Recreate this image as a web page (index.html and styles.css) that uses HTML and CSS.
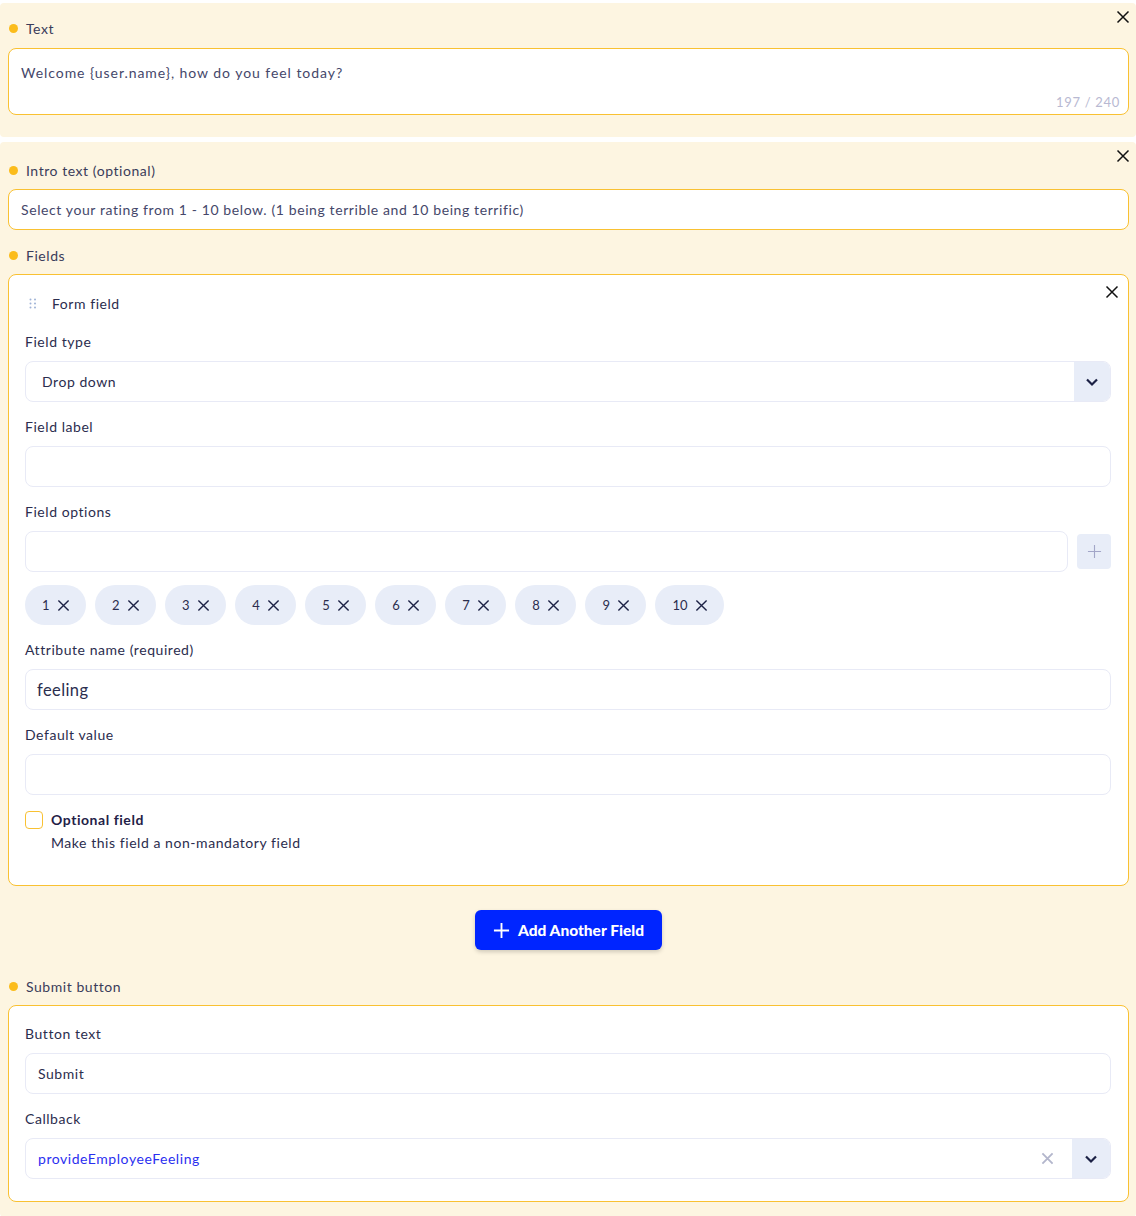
FILE: index.html
```html
<!DOCTYPE html>
<html>
<head>
<meta charset="utf-8">
<link rel="stylesheet" href="styles.css">
</head>
<body>
<section class="panel panel-first">
  <button class="close close-panel" aria-label="Close"><svg viewBox="0 0 14 14" width="14" height="14"><path d="M1.5 1.5l11 11M12.5 1.5l-11 11" stroke="#111" stroke-width="1.5" fill="none"/></svg></button>
  <div class="sec-label"><span class="dot"></span>Text</div>
  <div class="textarea">
    <div class="ta-text">Welcome {user.name}, how do you feel today?</div>
    <div class="counter">197 / 240</div>
  </div>
</section>

<section class="panel panel-main">
  <button class="close close-panel" aria-label="Close"><svg viewBox="0 0 14 14" width="14" height="14"><path d="M1.5 1.5l11 11M12.5 1.5l-11 11" stroke="#111" stroke-width="1.5" fill="none"/></svg></button>
  <div class="sec-label"><span class="dot"></span>Intro text (optional)</div>
  <div class="yinput">Select your rating from 1 - 10 below. (1 being terrible and 10 being terrific)</div>

  <div class="sec-label sec-gap"><span class="dot"></span>Fields</div>
  <div class="card card-field">
    <button class="close close-card" aria-label="Close"><svg viewBox="0 0 14 14" width="14" height="14"><path d="M1.5 1.5l11 11M12.5 1.5l-11 11" stroke="#111" stroke-width="1.5" fill="none"/></svg></button>
    <div class="card-head">
      <svg class="grip" viewBox="0 0 8 11" width="8" height="11"><g fill="#9fb2d6"><circle cx="1.5" cy="1.5" r="1"/><circle cx="6" cy="1.5" r="1"/><circle cx="1.5" cy="5.5" r="1"/><circle cx="6" cy="5.5" r="1"/><circle cx="1.5" cy="9.5" r="1"/><circle cx="6" cy="9.5" r="1"/></g></svg>
      <span>Form field</span>
    </div>

    <div class="field">
      <div class="flabel">Field type</div>
      <div class="select">
        <div class="sel-value">Drop down</div>
        <div class="sel-btn"><svg viewBox="0 0 14 10" width="14" height="10"><path d="M2 2.5l5 5 5-5" stroke="#1c2145" stroke-width="2.2" fill="none"/></svg></div>
      </div>
    </div>

    <div class="field">
      <div class="flabel">Field label</div>
      <div class="input"></div>
    </div>

    <div class="field">
      <div class="flabel">Field options</div>
      <div class="opt-row">
        <div class="input grow"></div>
        <div class="plus-btn"><svg viewBox="0 0 16 16" width="15" height="15"><path d="M8 1v14M1 8h14" stroke="#a3a6c8" stroke-width="1.2" fill="none"/></svg></div>
      </div>
      <div class="chips">
        <span class="chip">1<svg viewBox="0 0 14 14" width="13" height="13"><path d="M1.5 1.5l11 11M12.5 1.5l-11 11" stroke="#1c2145" stroke-width="1.5" fill="none"/></svg></span>
        <span class="chip">2<svg viewBox="0 0 14 14" width="13" height="13"><path d="M1.5 1.5l11 11M12.5 1.5l-11 11" stroke="#1c2145" stroke-width="1.5" fill="none"/></svg></span>
        <span class="chip">3<svg viewBox="0 0 14 14" width="13" height="13"><path d="M1.5 1.5l11 11M12.5 1.5l-11 11" stroke="#1c2145" stroke-width="1.5" fill="none"/></svg></span>
        <span class="chip">4<svg viewBox="0 0 14 14" width="13" height="13"><path d="M1.5 1.5l11 11M12.5 1.5l-11 11" stroke="#1c2145" stroke-width="1.5" fill="none"/></svg></span>
        <span class="chip">5<svg viewBox="0 0 14 14" width="13" height="13"><path d="M1.5 1.5l11 11M12.5 1.5l-11 11" stroke="#1c2145" stroke-width="1.5" fill="none"/></svg></span>
        <span class="chip">6<svg viewBox="0 0 14 14" width="13" height="13"><path d="M1.5 1.5l11 11M12.5 1.5l-11 11" stroke="#1c2145" stroke-width="1.5" fill="none"/></svg></span>
        <span class="chip">7<svg viewBox="0 0 14 14" width="13" height="13"><path d="M1.5 1.5l11 11M12.5 1.5l-11 11" stroke="#1c2145" stroke-width="1.5" fill="none"/></svg></span>
        <span class="chip">8<svg viewBox="0 0 14 14" width="13" height="13"><path d="M1.5 1.5l11 11M12.5 1.5l-11 11" stroke="#1c2145" stroke-width="1.5" fill="none"/></svg></span>
        <span class="chip">9<svg viewBox="0 0 14 14" width="13" height="13"><path d="M1.5 1.5l11 11M12.5 1.5l-11 11" stroke="#1c2145" stroke-width="1.5" fill="none"/></svg></span>
        <span class="chip">10<svg viewBox="0 0 14 14" width="13" height="13"><path d="M1.5 1.5l11 11M12.5 1.5l-11 11" stroke="#1c2145" stroke-width="1.5" fill="none"/></svg></span>
      </div>
    </div>

    <div class="field">
      <div class="flabel">Attribute name (required)</div>
      <div class="input big">feeling</div>
    </div>

    <div class="field">
      <div class="flabel">Default value</div>
      <div class="input"></div>
    </div>

    <div class="check-row">
      <span class="checkbox"></span>
      <div class="check-text">
        <div class="check-title">Optional field</div>
        <div class="check-desc">Make this field a non-mandatory field</div>
      </div>
    </div>
  </div>

  <div class="add-wrap">
    <button class="add-btn"><svg viewBox="0 0 18 18" width="17" height="17"><path d="M9 1v16M1 9h16" stroke="#fff" stroke-width="2" fill="none"/></svg>Add Another Field</button>
  </div>

  <div class="sec-label"><span class="dot"></span>Submit button</div>
  <div class="card card-submit">
    <div class="field first">
      <div class="flabel">Button text</div>
      <div class="input">Submit</div>
    </div>
    <div class="field">
      <div class="flabel">Callback</div>
      <div class="select">
        <div class="sel-value blue">provideEmployeeFeeling</div>
        <div class="sel-clear"><svg viewBox="0 0 14 14" width="13" height="13"><path d="M1.5 1.5l11 11M12.5 1.5l-11 11" stroke="#b3b6cc" stroke-width="2" fill="none"/></svg></div>
        <div class="sel-btn wide"><svg viewBox="0 0 14 10" width="14" height="10"><path d="M2 2.5l5 5 5-5" stroke="#1c2145" stroke-width="2.2" fill="none"/></svg></div>
      </div>
    </div>
  </div>
</section>
</body>
</html>
```

FILE: styles.css
```css
* { box-sizing: border-box; }

body {
  margin: 0;
  background: #ffffff;
  font-family: "Lato", "Noto Sans", sans-serif;
  font-size: 14px;
  letter-spacing: 0.55px;
  color: #2b2d4e;
}

.panel {
  position: relative;
  background: #fdf5e1;
  border-radius: 4px;
  padding: 15px 7px 22px 8px;
}

.panel-first {
  margin-top: 3px;
}

.panel-main {
  margin-top: 5px;
  padding-top: 18px;
  padding-bottom: 15px;
}

.close {
  position: absolute;
  border: 0;
  background: transparent;
  padding: 0;
  width: 14px;
  height: 14px;
  display: flex;
  cursor: pointer;
}

.close-panel {
  top: 7px;
  right: 6px;
}

.close-card {
  top: 10px;
  right: 9px;
}

.sec-label {
  display: flex;
  align-items: center;
  height: 20px;
  color: #3a3c5a;
  font-size: 14px;
}

.dot {
  width: 9px;
  height: 9px;
  border-radius: 50%;
  background: #fbbc1c;
  margin: 0 8px 0 1px;
}

.textarea {
  margin-top: 10px;
  height: 67px;
  background: #fff;
  border: 1px solid #f9c132;
  border-radius: 8px;
  padding: 14px 8px 0 12px;
  display: flex;
  flex-direction: column;
}

.ta-text {
  line-height: 20px;
  color: #45476a;
  letter-spacing: 0.95px;
}

.counter {
  margin-top: auto;
  margin-bottom: 4px;
  text-align: right;
  font-size: 13px;
  color: #b8b9d2;
  line-height: 16px;
  letter-spacing: 0.7px;
}

.yinput {
  margin-top: 9px;
  height: 41px;
  background: #fff;
  border: 1px solid #f9c132;
  border-radius: 8px;
  padding: 0 12px;
  display: flex;
  align-items: center;
  color: #45476a;
  letter-spacing: 0.6px;
}

.sec-gap {
  margin-top: 15px;
}

.card {
  position: relative;
  margin-top: 9px;
  background: #fff;
  border: 1px solid #f9c132;
  border-radius: 8px;
  padding: 18px 17px 33px 16px;
}

.card-submit {
  padding-bottom: 22px;
}

.card-head {
  display: flex;
  align-items: center;
  height: 20px;
  color: #2b2d4e;
}

.grip {
  margin: 0 15px 0 4px;
}

.field {
  margin-top: 19px;
}

.card-field .field + .field {
  margin-top: 15px;
}

.card-submit .field.first {
  margin-top: 0;
}

.card-submit .field + .field {
  margin-top: 15px;
}

.flabel {
  height: 20px;
  line-height: 20px;
  color: #2b2d4e;
  margin-bottom: 9px;
}

.input {
  height: 41px;
  border: 1px solid #e8eaf6;
  border-radius: 8px;
  background: #fff;
  padding: 0 12px;
  display: flex;
  align-items: center;
  color: #2b2d4e;
}

.input.big {
  font-size: 16.5px;
  letter-spacing: 0.4px;
  padding-left: 11px;
}

.select {
  height: 41px;
  border: 1px solid #e8eaf6;
  border-radius: 8px;
  background: #fff;
  display: flex;
  align-items: stretch;
  overflow: hidden;
}

.sel-value {
  flex: 1;
  display: flex;
  align-items: center;
  padding-left: 16px;
  color: #2b2d4e;
}

.sel-value.blue {
  color: #2b2ff0;
  padding-left: 12px;
}

.sel-clear {
  width: 50px;
  display: flex;
  align-items: center;
  justify-content: center;
}

.sel-btn {
  width: 36px;
  background: #e8edf8;
  display: flex;
  align-items: center;
  justify-content: center;
}

.sel-btn.wide {
  width: 38px;
}

.opt-row {
  display: flex;
  align-items: center;
  gap: 9px;
}

.grow {
  flex: 1;
}

.plus-btn {
  width: 34px;
  height: 35px;
  background: #e8edf8;
  border-radius: 4px;
  display: flex;
  align-items: center;
  justify-content: center;
}

.chips {
  display: flex;
  gap: 9px;
  margin-top: 13px;
}

.chip {
  height: 40px;
  border-radius: 20px;
  background: #e8edf8;
  display: inline-flex;
  align-items: center;
  padding: 0 16px 0 17px;
  gap: 7.5px;
  font-size: 13px;
  letter-spacing: 0;
  color: #2b2d4e;
}

.check-row {
  display: flex;
  align-items: flex-start;
  margin-top: 16px;
}

.checkbox {
  width: 18px;
  height: 18px;
  border: 1.5px solid #f9c132;
  border-radius: 4px;
  margin-right: 8px;
  flex: none;
}

.check-title {
  font-weight: 700;
  line-height: 18px;
  color: #1f2147;
}

.check-desc {
  margin-top: 5px;
  line-height: 18px;
  color: #2b2d4e;
}

.add-wrap {
  display: flex;
  justify-content: center;
  margin-top: 24px;
  margin-bottom: 26px;
}

.add-btn {
  height: 40px;
  width: 187px;
  border: 0;
  border-radius: 6px;
  background: #0025ff;
  color: #fff;
  font-family: "Lato", sans-serif;
  font-weight: 900;
  font-size: 15.5px;
  letter-spacing: 0;
  display: flex;
  align-items: center;
  justify-content: center;
  gap: 8px;
  box-shadow: 0 2px 4px rgba(0, 0, 0, 0.18);
  cursor: pointer;
}
```
